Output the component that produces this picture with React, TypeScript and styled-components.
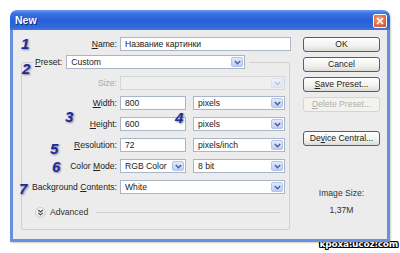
import React from 'react';
import styled, { createGlobalStyle } from 'styled-components';

const Global = createGlobalStyle`
  html, body { margin: 0; padding: 0; background: #fff; }
  body { font-family: "Liberation Sans", Arial, sans-serif; }
  #root { width: 400px; height: 253px; overflow: hidden; }
`;

const Page = styled.div`
  width: 400px;
  height: 253px;
  padding: 10px 0 0 10px;
  box-sizing: border-box;
  display: flex;
  flex-direction: column;
`;

const Window = styled.div`
  position: relative;
  width: 380px;
  height: 232px;
  flex: none;
  display: flex;
  flex-direction: column;
  border-radius: 7px 7px 0 0;
  overflow: hidden;
  box-shadow: 1px 1px 2px rgba(0, 0, 0, 0.2);
`;

const TitleBar = styled.div`
  height: 20px;
  flex: none;
  display: flex;
  align-items: center;
  justify-content: space-between;
  padding: 0 3px 0 5px;
  background: linear-gradient(#6a9cee 0%, #3a72e0 18%, #2a60d8 50%, #3068dc 85%, #4577dc 100%);
  color: #fff;
  font: bold 10.5px "Liberation Sans", Arial, sans-serif;
  text-shadow: 1px 1px 0 #0a2a80;
`;

const CloseBtn = styled.div`
  width: 14px;
  height: 14px;
  margin-top: 1px;
  border: 1px solid #fff;
  border-radius: 2px;
  box-sizing: border-box;
  background: radial-gradient(circle at 40% 35%, #f5a283, #e06a42 60%, #c84a28);
  display: flex;
  align-items: center;
  justify-content: center;
`;

const Body = styled.div`
  flex: 1;
  display: flex;
  gap: 12px;
  background: #ececec;
  border: 3px solid #6a8fdc;
  border-top: none;
  padding: 7px 7px 0 8px;
`;

const LeftCol = styled.div`
  width: 270px;
  display: flex;
  flex-direction: column;
`;

const RightCol = styled.div`
  width: 77px;
  display: flex;
  flex-direction: column;
  gap: 5px;
`;

const Row = styled.div<{ $mt?: number }>`
  display: grid;
  grid-template-columns: 95px 1fr;
  column-gap: 3px;
  height: 14px;
  margin-top: ${p => p.$mt ?? 0}px;
`;

const NameRow = styled(Row)`
  grid-template-columns: 96px 171px;
`;

const Label = styled.label<{ $disabled?: boolean }>`
  text-align: right;
  font-size: 8.6px;
  line-height: 14px;
  color: ${p => (p.$disabled ? '#aaaaaa' : '#222')};
  white-space: nowrap;
`;

const Fields = styled.div`
  display: flex;
  gap: 7px;
`;

const TextBox = styled.div<{ $w?: number }>`
  width: ${p => (p.$w ? `${p.$w}px` : 'auto')};
  flex: ${p => (p.$w ? 'none' : '1')};
  height: 14px;
  box-sizing: border-box;
  border: 1px solid #a9b6c9;
  background: #fff;
  font-size: 8.6px;
  line-height: 12px;
  padding-left: 4px;
  color: #222;
  white-space: nowrap;
  overflow: hidden;
`;

const Select = styled.div<{ $w?: number; $disabled?: boolean }>`
  width: ${p => (p.$w ? `${p.$w}px` : 'auto')};
  flex: ${p => (p.$w ? 'none' : '1')};
  height: 14px;
  box-sizing: border-box;
  border: 1px solid ${p => (p.$disabled ? '#d6d6d6' : '#a9b6c9')};
  background: ${p => (p.$disabled ? '#efefef' : '#fff')};
  display: flex;
  align-items: center;
  padding: 0 0 0 4px;
  font-size: 8.6px;
  color: #222;
`;

const SelectText = styled.span`
  flex: 1;
  white-space: nowrap;
  overflow: hidden;
`;

const Arrow = styled.div<{ $disabled?: boolean }>`
  width: 12px;
  height: 10px;
  margin-right: 1px;
  box-sizing: border-box;
  border: 1px solid ${p => (p.$disabled ? '#d8e0ee' : '#b3c4ea')};
  border-radius: 2px;
  background: ${p =>
    p.$disabled ? 'linear-gradient(#eef2fa, #e2e8f4)' : 'linear-gradient(#e3ebfc, #bccdf5)'};
  display: flex;
  align-items: center;
  justify-content: center;
`;

const GroupBox = styled.div`
  width: 269px;
  height: 168px;
  margin-top: 11px;
  box-sizing: border-box;
  border: 1px solid #cfcfcf;
  border-radius: 3px;
  display: flex;
  flex-direction: column;
`;

const PresetRow = styled.div`
  align-self: flex-start;
  margin: -8px 0 0 11px;
  padding: 0 4px 0 2px;
  background: #ececec;
  display: flex;
  gap: 4px;
  height: 14px;
`;

const AdvancedRow = styled.div`
  display: flex;
  align-items: center;
  margin: 12px 9px 0 13px;
  height: 12px;
  gap: 4px;
  font-size: 8.6px;
  color: #333;
`;

const Circle = styled.div`
  width: 11px;
  height: 11px;
  border-radius: 50%;
  background: radial-gradient(circle at 40% 35%, #ffffff, #dadada);
  border: 1px solid #d0d0d0;
  box-sizing: border-box;
  display: flex;
  align-items: center;
  justify-content: center;
`;

const Rule = styled.div`
  flex: 1;
  height: 1px;
  margin-left: 4px;
  background: #cfcfcf;
`;

const Button = styled.div<{ $disabled?: boolean; $mt?: number }>`
  height: 15px;
  box-sizing: border-box;
  margin-top: ${p => p.$mt ?? 0}px;
  border: 1px solid ${p => (p.$disabled ? '#d6d5cc' : '#40609c')};
  border-radius: 3px;
  background: ${p =>
    p.$disabled ? '#f2f2ee' : 'linear-gradient(#ffffff 0%, #f1f1ee 60%, #dcdcd6 100%)'};
  color: ${p => (p.$disabled ? '#b0b0b0' : '#222')};
  font-size: 8.6px;
  line-height: 13px;
  text-align: center;
  white-space: nowrap;
`;

const Info = styled.div<{ $mt?: number }>`
  margin-top: ${p => p.$mt ?? 0}px;
  text-align: center;
  font-size: 8.6px;
  line-height: 11px;
  color: #333;
`;

const Num = styled.div<{ $x: number; $y: number }>`
  position: absolute;
  left: ${p => p.$x}px;
  top: ${p => p.$y}px;
  font: italic bold 15px/15px "Liberation Sans", Arial, sans-serif;
  color: #1d2a9e;
  text-shadow: 1px 1px 2px rgba(0, 0, 40, 0.45);
`;

const Watermark = styled.div`
  align-self: flex-end;
  margin: -3px 2px 0 0;
  font: bold 9px/11px "DejaVu Sans", sans-serif;
  color: #fff;
  letter-spacing: -0.2px;
  text-shadow: 1px 0 0 #000, -1px 0 0 #000, 0 1px 0 #000, 0 -1px 0 #000, 1px 1px 0 #000,
    -1px -1px 0 #000, 1px -1px 0 #000, -1px 1px 0 #000;
`;

const Chevron: React.FC<{ disabled?: boolean }> = ({ disabled }) => (
  <svg width="7" height="5" viewBox="0 0 7 5">
    <path
      d="M0.8 1 L3.5 3.8 L6.2 1"
      fill="none"
      stroke={disabled ? '#b8c4dc' : '#4a5f8a'}
      strokeWidth="1.4"
    />
  </svg>
);

const Dropdown: React.FC<{ value?: string; w?: number; disabled?: boolean }> = ({
  value = '',
  w,
  disabled,
}) => (
  <Select $w={w} $disabled={disabled}>
    <SelectText>{value}</SelectText>
    <Arrow $disabled={disabled}>
      <Chevron disabled={disabled} />
    </Arrow>
  </Select>
);

export default function App() {
  return (
    <>
      <Global />
      <Page>
        <Window>
          <TitleBar>
            <span>New</span>
            <CloseBtn>
              <svg width="8" height="8" viewBox="0 0 8 8">
                <path d="M1 1 L7 7 M7 1 L1 7" stroke="#fff" strokeWidth="1.6" />
              </svg>
            </CloseBtn>
          </TitleBar>
          <Body>
            <LeftCol>
              <NameRow>
                <Label>
                  <u>N</u>ame:
                </Label>
                <TextBox>Название картинки</TextBox>
              </NameRow>
              <GroupBox>
                <PresetRow>
                  <Label>
                    <u>P</u>reset:
                  </Label>
                  <Dropdown value="Custom" w={179} />
                </PresetRow>
                <Row $mt={7}>
                  <Label $disabled>Size:</Label>
                  <Fields>
                    <Dropdown w={165} disabled />
                  </Fields>
                </Row>
                <Row $mt={6}>
                  <Label>
                    <u>W</u>idth:
                  </Label>
                  <Fields>
                    <TextBox $w={66}>800</TextBox>
                    <Dropdown value="pixels" w={92} />
                  </Fields>
                </Row>
                <Row $mt={7}>
                  <Label>
                    <u>H</u>eight:
                  </Label>
                  <Fields>
                    <TextBox $w={66}>600</TextBox>
                    <Dropdown value="pixels" w={92} />
                  </Fields>
                </Row>
                <Row $mt={7}>
                  <Label>
                    <u>R</u>esolution:
                  </Label>
                  <Fields>
                    <TextBox $w={66}>72</TextBox>
                    <Dropdown value="pixels/inch" w={92} />
                  </Fields>
                </Row>
                <Row $mt={7}>
                  <Label>
                    Color <u>M</u>ode:
                  </Label>
                  <Fields>
                    <Dropdown value="RGB Color" w={66} />
                    <Dropdown value="8 bit" w={92} />
                  </Fields>
                </Row>
                <Row $mt={7}>
                  <Label>
                    Background <u>C</u>ontents:
                  </Label>
                  <Fields>
                    <Dropdown value="White" w={165} />
                  </Fields>
                </Row>
                <AdvancedRow>
                  <Circle>
                    <svg width="7" height="7" viewBox="0 0 7 7">
                      <path
                        d="M1.2 1 L3.5 3 L5.8 1 M1.2 3.8 L3.5 5.8 L5.8 3.8"
                        fill="none"
                        stroke="#444"
                        strokeWidth="1.1"
                      />
                    </svg>
                  </Circle>
                  <span>Advanced</span>
                  <Rule />
                </AdvancedRow>
              </GroupBox>
            </LeftCol>
            <RightCol>
              <Button>OK</Button>
              <Button>Cancel</Button>
              <Button>
                <u>S</u>ave Preset...
              </Button>
              <Button $disabled>
                <u>D</u>elete Preset...
              </Button>
              <Button $mt={14}>
                De<u>v</u>ice Central...
              </Button>
              <Info $mt={37}>Image Size:</Info>
              <Info $mt={1}>1,37M</Info>
            </RightCol>
          </Body>
          <Num $x={11} $y={26}>1</Num>
          <Num $x={12} $y={51}>2</Num>
          <Num $x={55} $y={99}>3</Num>
          <Num $x={165} $y={100}>4</Num>
          <Num $x={40} $y={131}>5</Num>
          <Num $x={42} $y={149}>6</Num>
          <Num $x={9} $y={171}>7</Num>
        </Window>
        <Watermark>kpoxa.ucoz.com</Watermark>
      </Page>
    </>
  );
}
